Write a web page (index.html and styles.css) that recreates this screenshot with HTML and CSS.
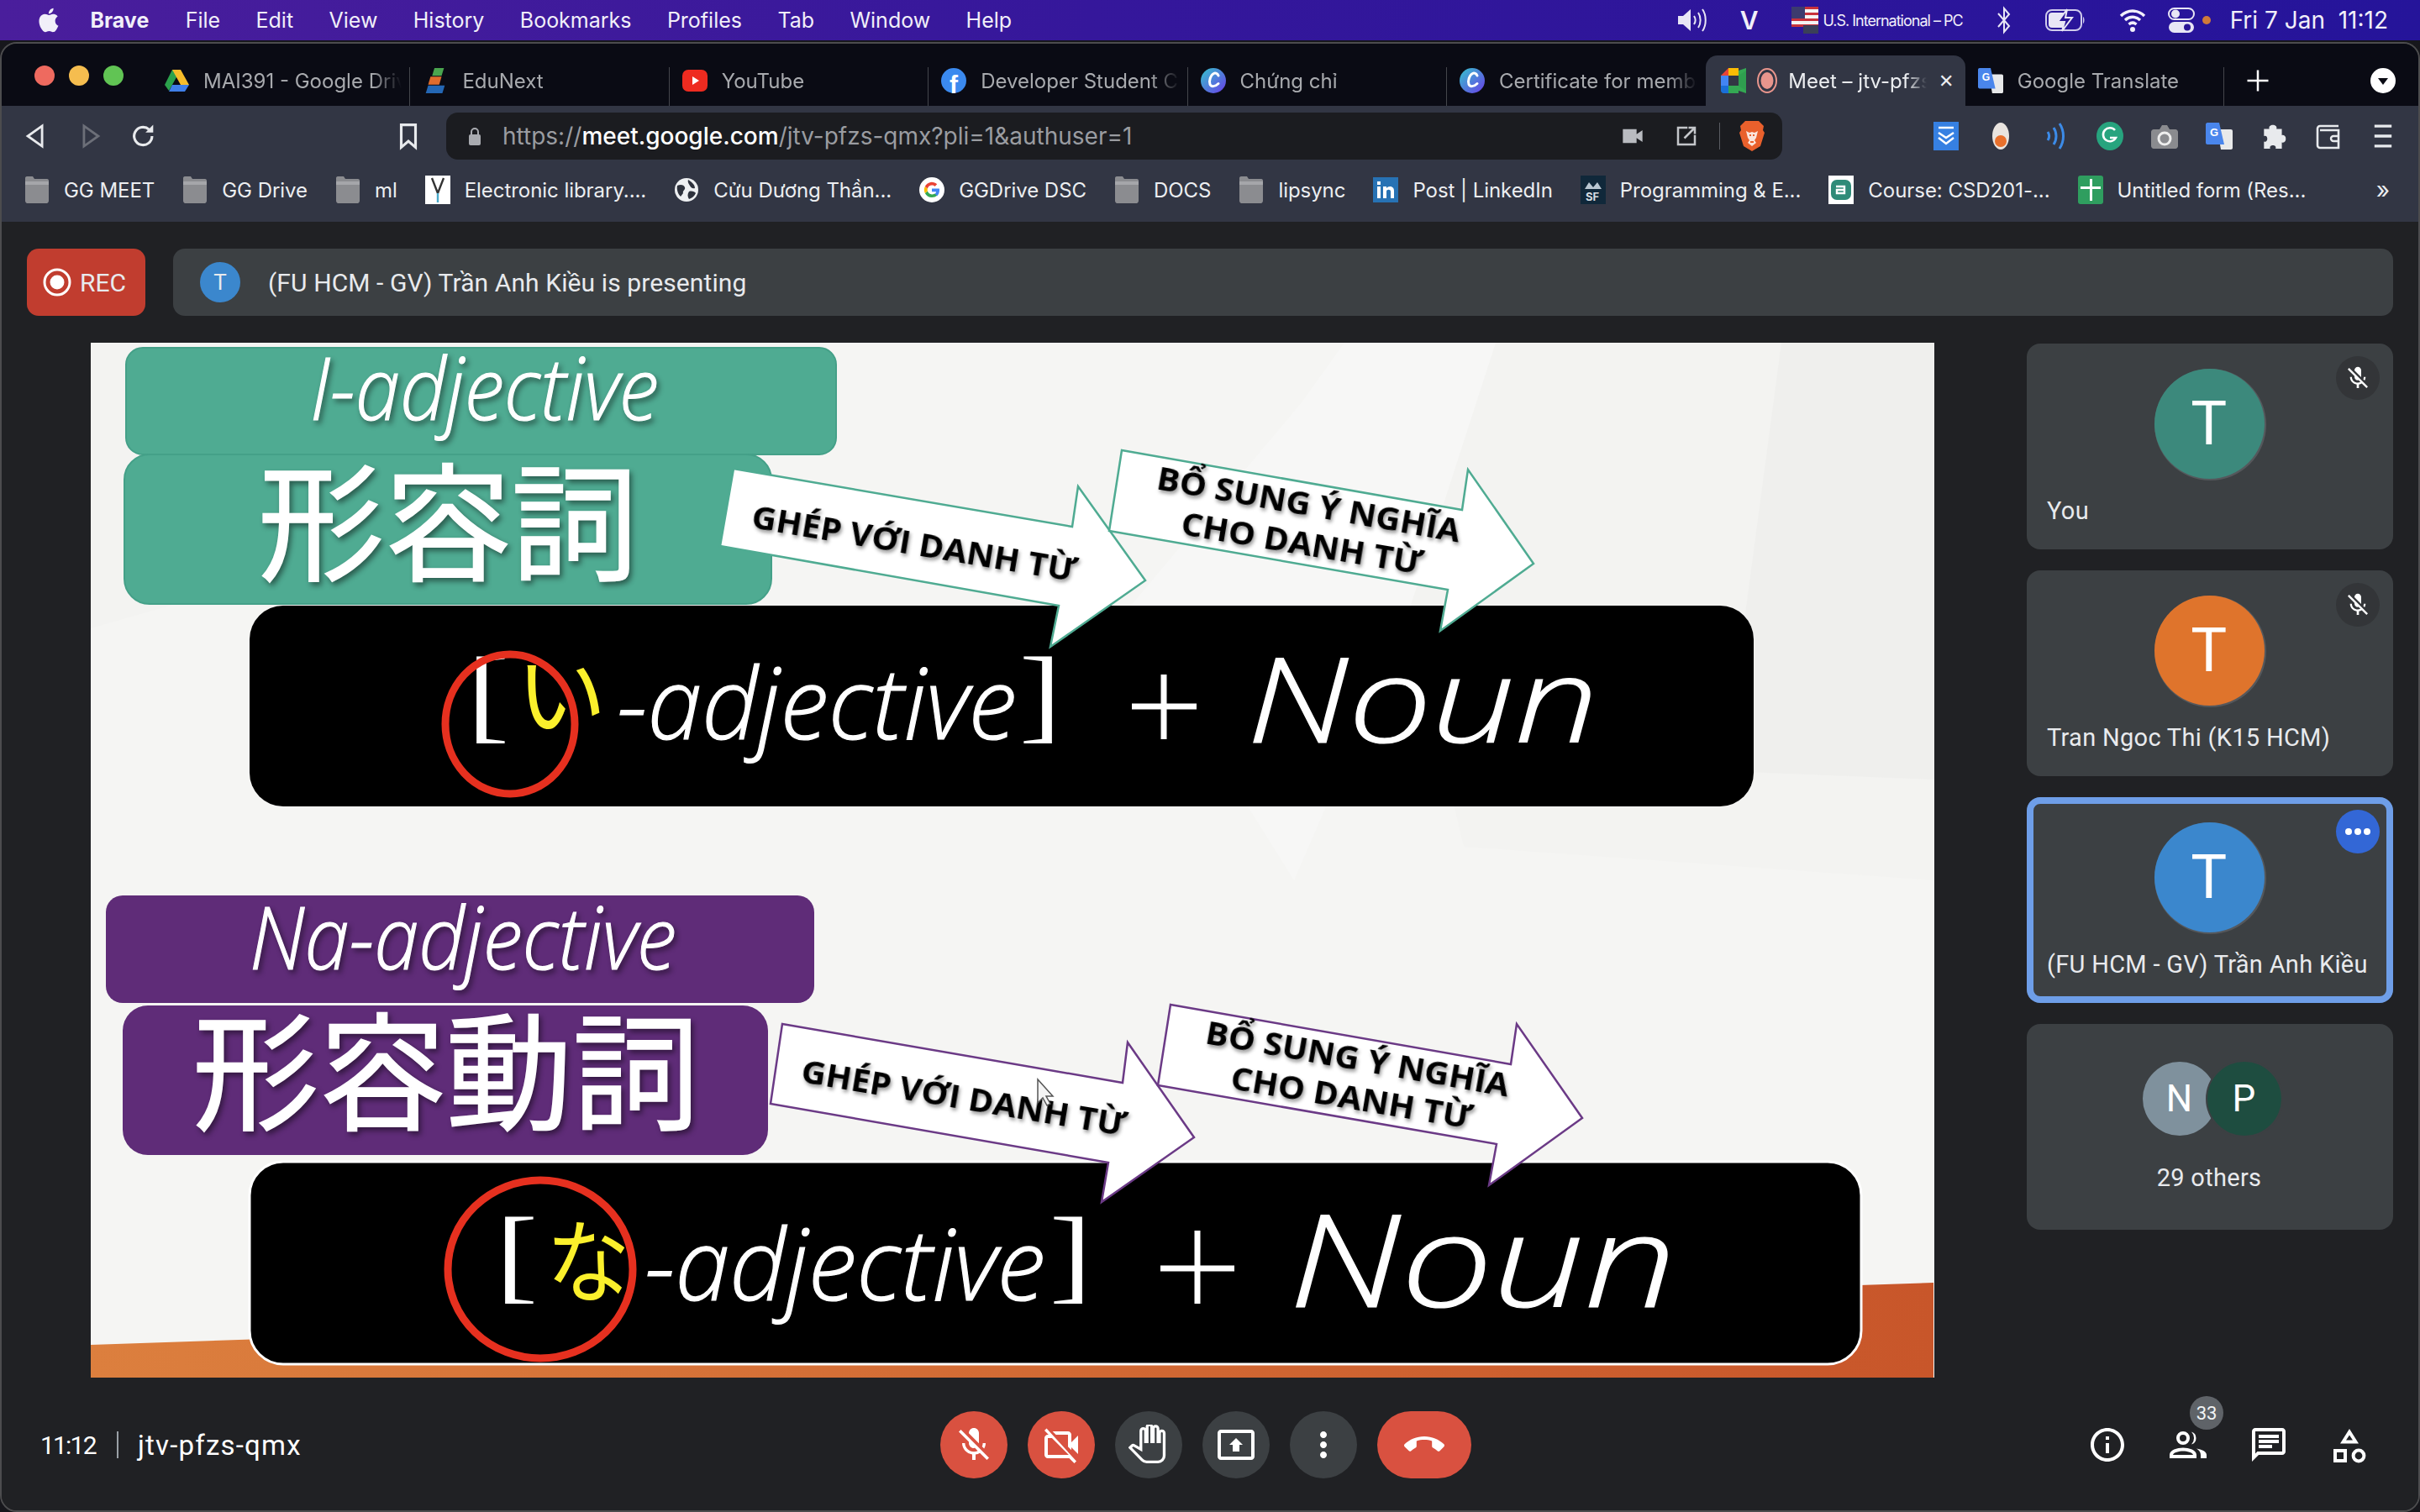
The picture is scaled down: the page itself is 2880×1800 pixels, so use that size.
FILE: index.html
```html
<!DOCTYPE html>
<html lang="en">
<head>
    <meta charset="UTF-8">
    <meta name="viewport" content="width=device-width, initial-scale=1.0">
    <title>Meet - jtv-pfzs-qmx</title>
    <link rel="stylesheet" href="styles.css">
</head>
<body>
    <svg class="icon-defs" width="0" height="0" aria-hidden="true">
        <symbol id="i-folder" viewBox="0 0 30 34"><path d="M1 3c0-1 .6-2 2-2h7l2 3h15c1.500 0 2 1 2 2v24c0 1.500-1 3-2.500 3h-23C2 33 1 31.500 1 30z" fill="#8b8c90"/><path d="M1 7h28v4H1z" fill="#a5a6aa"/></symbol>
        <symbol id="i-mic-off" viewBox="0 0 24 24"><path d="M19 11h-1.700c0 .74-.16 1.430-.43 2.050l1.230 1.230c.56-.98.9-2.090.9-3.280zm-4.020.17c0-.06.02-.11.02-.17V5c0-1.660-1.340-3-3-3S9 3.340 9 5v.18l5.980 5.990zM4.270 3L3 4.270l6.010 6.010V11c0 1.660 1.330 3 2.990 3 .22 0 .44-.03.65-.08l1.660 1.660c-.71.33-1.500.52-2.310.52-2.760 0-5.300-2.100-5.300-5.100H5c0 3.410 2.720 6.230 6 6.720V21h2v-3.280c.91-.13 1.770-.45 2.540-.9L19.730 21 21 19.730 4.270 3z"/></symbol>
        <symbol id="i-canva" viewBox="0 0 30 30"><defs><linearGradient id="canva-grad" x1="0" y1="0" x2="1" y2="1"><stop offset="0" stop-color="#35c3cc"/><stop offset="1" stop-color="#6a3de8"/></linearGradient></defs><circle cx="15" cy="15" r="15" fill="url(#canva-grad)"/><path d="M21 9c-1-2.500-3.500-3.500-5.500-2.500-4 2-6 9-4.500 13 1.200 3 6 3 10-1" fill="none" stroke="#fff" stroke-width="3" stroke-linecap="round"/></symbol>
    </svg>

    <div class="menubar">
        <svg class="apple" viewBox="0 0 24 24"><path d="M18.710 19.500c-.83 1.240-1.710 2.450-3.050 2.470-1.340.03-1.770-.79-3.290-.79-1.530 0-2 .77-3.270.82-1.310.05-2.300-1.320-3.140-2.530C4.250 17 2.940 12.450 4.700 9.390c.87-1.520 2.430-2.480 4.120-2.510 1.280-.02 2.500.87 3.290.87.78 0 2.260-1.070 3.810-.91.65.03 2.470.26 3.640 1.980-.09.06-2.170 1.280-2.150 3.810.03 3.020 2.650 4.030 2.680 4.040-.03.07-.42 1.440-1.380 2.830M13 3.500c.73-.83 1.940-1.460 2.940-1.500.13 1.170-.34 2.350-1.040 3.190-.69.85-1.830 1.510-2.950 1.420-.15-1.150.41-2.350 1.050-3.110z"/></svg>
        <span class="menu-app">Brave</span>
        <span>File</span>
        <span>Edit</span>
        <span>View</span>
        <span>History</span>
        <span>Bookmarks</span>
        <span>Profiles</span>
        <span>Tab</span>
        <span>Window</span>
        <span>Help</span>

        <div class="status">
            <svg class="st-volume" viewBox="0 0 36 32"><path d="M2 11h6l9-8v26l-9-8H2z" fill="#e8e6f5"/><path d="M21 11c2 3 2 7 0 10M26 7c3.500 5 3.500 13 0 18M31 3c5 7 5 19 0 26" fill="none" stroke="#e8e6f5" stroke-width="2"/></svg>
            <span class="st-v">V</span>
            <div class="st-input">
                <svg class="st-flag" viewBox="0 0 32 32"><rect width="32" height="24" fill="#f4f4f4"/><path d="M0 0h32v3H0zM0 7h32v3H0zM0 14h32v3H0zM0 21h32v3H0z" fill="#c8323c"/><rect width="16" height="14" fill="#3c3b6e"/><rect x="14" y="22" width="18" height="10" fill="#3a3f58"/></svg>
                <span>U.S. International – PC</span>
            </div>
            <svg class="st-bt" viewBox="0 0 18 34"><path d="M2 9l13 15-6 7V3l6 7L2 25" fill="none" stroke="#e8e6f5" stroke-width="2"/></svg>
            <svg class="st-battery" viewBox="0 0 48 32"><rect x="1" y="4" width="42" height="24" rx="7" fill="none" stroke="#cfcbec" stroke-width="2"/><rect x="4" y="7" width="20" height="18" rx="4" fill="#e8e6f5"/><path d="M45 12c2 1 2 7 0 8z" fill="#cfcbec"/><path d="M26 3L15 18h8l-3 11 12-16h-8z" fill="#2a1596" stroke="#e8e6f5" stroke-width="2"/></svg>
            <svg class="st-wifi" viewBox="0 0 32 32"><path d="M2 11c8-8 20-8 28 0M7 16c5.500-5 12.500-5 18 0M11.500 21c3-2.500 6-2.500 9 0" fill="none" stroke="#f2f0fb" stroke-width="3.400"/><circle cx="16" cy="27" r="3" fill="#f2f0fb"/></svg>
            <svg class="st-cc" viewBox="0 0 32 34"><rect x="1" y="3" width="30" height="13" rx="6.500" fill="none" stroke="#e8e6f5" stroke-width="2"/><circle cx="9" cy="9.500" r="5" fill="#e8e6f5"/><rect x="1" y="19" width="30" height="13" rx="6.500" fill="#e8e6f5"/><circle cx="23" cy="25.500" r="4" fill="#2a1596"/></svg>
            <span class="st-dot"></span>
            <span class="st-date">Fri 7 Jan&nbsp;&nbsp;11:12</span>
        </div>
    </div>

    <div class="window">
        <div class="tabstrip">
            <div class="lights"><span class="light-red"></span><span class="light-yellow"></span><span class="light-green"></span></div>

            <div class="tab">
                <svg class="favicon" viewBox="0 0 30 30"><path d="M10 2h10L6 27l-5-7z" fill="#2ba24c"/><path d="M10 2h10l10 18H20z" fill="#f7bd2a"/><path d="M6 28l4-8h20l-5 8z" fill="#3f7fe8"/></svg>
                <span class="tab-title">MAI391 - Google Drive</span>
            </div>
            <div class="tab">
                <svg class="favicon" viewBox="0 0 30 34"><path d="M14 1h12l-3 10H11z" fill="#4aa54f"/><path d="M9 12h14l-3 10H6z" fill="#e06c2c"/><path d="M6 23h21l-3 10H3z" fill="#2467b4"/></svg>
                <span class="tab-title">EduNext</span>
            </div>
            <div class="tab">
                <svg class="favicon" viewBox="0 0 30 30"><rect y="2" width="30" height="26" rx="7" fill="#ee2b20"/><path d="M12 10l8 5-8 5z" fill="#fff"/></svg>
                <span class="tab-title">YouTube</span>
            </div>
            <div class="tab">
                <svg class="favicon" viewBox="0 0 30 30"><circle cx="15" cy="15" r="15" fill="#3b8aef"/><text class="fb-f" x="10" y="30">f</text></svg>
                <span class="tab-title">Developer Student Clubs</span>
            </div>
            <div class="tab">
                <svg class="favicon"><use href="#i-canva"/></svg>
                <span class="tab-title">Chứng chỉ</span>
            </div>
            <div class="tab tab-before-active">
                <svg class="favicon"><use href="#i-canva"/></svg>
                <span class="tab-title">Certificate for members</span>
            </div>
            <div class="tab tab-active">
                <svg class="favicon" viewBox="0 0 30 30"><path d="M0 9l9-9v9z" fill="#ea4335"/><path d="M9 0h12v9H9z" fill="#fbbc04"/><path d="M0 9h9v12H0z" fill="#4285f4"/><path d="M0 21h9v9H3c-1.500 0-3-1.500-3-3z" fill="#1a6fd8"/><path d="M9 21h12v9H9z" fill="#34a853"/><path d="M21 3v24l9 3V0z" fill="#34a853"/><path d="M21 9l9-6v24l-9-6z" fill="#2f9e4f"/></svg>
                <svg class="rec-dot" viewBox="0 0 24 30"><ellipse cx="12" cy="15" rx="11" ry="14" fill="none" stroke="#e8958c" stroke-width="2"/><ellipse cx="12" cy="15" rx="7.500" ry="10" fill="#e8958c"/></svg>
                <span class="tab-title">Meet – jtv-pfzs-qmx</span>
                <span class="tab-close">✕</span>
            </div>
            <div class="tab">
                <svg class="favicon" viewBox="0 0 32 32"><path d="M14 8h16c1 0 2 .8 2 2v20c0 1-.8 2-2 2H18z" fill="#e8e9ea"/><path d="M2 0h14l6 26H2c-1 0-2-1-2-2V2C0 1 1 0 2 0z" fill="#4a86ec"/><text class="translate-g" x="5" y="16">G</text></svg>
                <span class="tab-title">Google Translate</span>
            </div>

            <svg class="new-tab" viewBox="0 0 24 24"><path d="M11 2h2v9h9v2h-9v9h-2v-9H2v-2h9z"/></svg>
            <svg class="tab-search" viewBox="0 0 30 30"><circle cx="15" cy="15" r="15" fill="#fff"/><path d="M9 12h12l-6 8z" fill="#0a0b14"/></svg>
        </div>

        <div class="toolbar">
            <button class="nav-btn"><svg viewBox="0 0 24 24"><path d="M17 3.500v17L5 12z" fill="none" stroke="#e8eaed" stroke-width="2"/></svg></button>
            <button class="nav-btn"><svg viewBox="0 0 24 24"><path d="M7 3.500v17L19 12z" fill="none" stroke="#6c6f78" stroke-width="2"/></svg></button>
            <button class="nav-btn"><svg viewBox="0 0 24 24"><path d="M19 12a7.500 7.500 0 1 1-2.500-5.600" fill="none" stroke="#e8eaed" stroke-width="2.200"/><path d="M20 2.500V9h-6.500z" fill="#e8eaed"/></svg></button>
            <svg class="bookmark-star" viewBox="0 0 24 28"><path d="M5 3h14v22l-7-6-7 6z" fill="none" stroke="#e8eaed" stroke-width="2.600"/></svg>

            <div class="address">
                <svg class="lock" viewBox="0 0 18 24"><path d="M5 10V7a4 4 0 0 1 8 0v3" fill="none" stroke="#a9abb0" stroke-width="2"/><rect x="2" y="10" width="14" height="13" rx="2" fill="#a9abb0"/></svg>
                <span class="url">https://<b>meet.google.com</b>/jtv-pfzs-qmx?pli=1&amp;authuser=1</span>
                <svg class="addr-cam" viewBox="0 0 24 24"><path d="M2 5h14v14H2zM16 10l6-4v12l-6-4z" fill="#b9bbc0"/></svg>
                <svg class="addr-share" viewBox="0 0 24 24"><path d="M13 4H4v16h16v-9M10 14L20 4M14 4h6v6" fill="none" stroke="#c4c6ca" stroke-width="2"/></svg>
                <span class="addr-sep"></span>
                <svg class="addr-brave" viewBox="0 0 32 38"><path d="M8 1h16l6 6-1 5 2 3-5 16-10 6-10-6L1 15l2-3-1-5z" fill="#e9602c"/><path d="M9 13l4 2 3-1 3 1 4-2-2 8-2 3 2 3-5 4-5-4 2-3-2-3z" fill="#fbe5dc"/><path d="M13 18h2M17 18h2M14 26h4" stroke="#e9602c" stroke-width="2"/></svg>
            </div>

            <div class="extensions">
                <span class="ext"><svg viewBox="0 0 30 34"><rect width="30" height="34" fill="#3680e2"/><path d="M6 7h18M6 13l9 6 9-6M6 19l9 7 9-7" fill="none" stroke="#fff" stroke-width="2.400"/></svg></span>
                <span class="ext"><svg viewBox="0 0 22 34"><ellipse cx="11" cy="17" rx="10" ry="16" fill="#e9e4df"/><circle cx="11" cy="23" r="7" fill="#e8702c"/></svg></span>
                <span class="ext"><svg viewBox="0 0 24 34"><path d="M3 12c2 3 2 7 0 10M10 7c4 6 4 14 0 20M17 2c6 9 6 21 0 30" fill="none" stroke="#3c8be8" stroke-width="3"/></svg></span>
                <span class="ext"><svg viewBox="0 0 32 34"><ellipse cx="16" cy="17" rx="16" ry="17" fill="#27a47e"/><path d="M22 10a8 8 0 1 0 1 9h-7" fill="none" stroke="#fff" stroke-width="2.600"/></svg></span>
                <span class="ext"><svg viewBox="0 0 32 34"><path d="M3 9h7l3-5h6l3 5h7c1.500 0 3 1.500 3 3v17c0 1.500-1.500 3-3 3H3c-1.500 0-3-1.500-3-3V12c0-1.500 1.500-3 3-3z" fill="#8a8b8f"/><circle cx="16" cy="20" r="7" fill="#8a8b8f" stroke="#eee" stroke-width="3"/></svg></span>
                <span class="ext"><svg viewBox="0 0 32 32"><path d="M14 8h16c1 0 2 .8 2 2v20c0 1-.8 2-2 2H18z" fill="#e8e9ea"/><path d="M2 0h14l6 26H2c-1 0-2-1-2-2V2C0 1 1 0 2 0z" fill="#4a86ec"/><text class="translate-g" x="5" y="16">G</text></svg></span>
                <span class="ext"><svg viewBox="0 0 28 32"><path d="M3 8h6c-2-6 10-6 8 0h6v7c6-2 6 10 0 8v7h-7c2-5-8-5-6 0H3v-8c5 2 5-8 0-6z" fill="#e8eaed"/></svg></span>
                <span class="ext"><svg viewBox="0 0 32 34"><path d="M28 5H6a3 3 0 0 0-3 3v20a3 3 0 0 0 3 3h22V10H6" fill="none" stroke="#e8eaed" stroke-width="2.600"/><path d="M29 17h-7a3 3 0 0 0 0 6h7" fill="none" stroke="#e8eaed" stroke-width="2.400"/></svg></span>
                <span class="ext"><svg viewBox="0 0 24 30"><path d="M3 3h18v3H3zM3 13.500h18v3H3zM3 24h18v3H3z" fill="#e8eaed"/></svg></span>
            </div>
        </div>

        <div class="bookmarks">
            <span class="bm"><svg class="bm-ico"><use href="#i-folder"/></svg>GG MEET</span>
            <span class="bm"><svg class="bm-ico"><use href="#i-folder"/></svg>GG Drive</span>
            <span class="bm"><svg class="bm-ico"><use href="#i-folder"/></svg>ml</span>
            <span class="bm"><svg class="bm-ico" viewBox="0 0 30 34"><rect width="30" height="34" fill="#fff"/><path d="M8 3l7 18 7-18" fill="none" stroke="#333" stroke-width="2.400"/><path d="M15 21v11" stroke="#49a9c9" stroke-width="2.400"/></svg>Electronic library....</span>
            <span class="bm"><svg class="bm-ico" viewBox="0 0 30 30"><circle cx="15" cy="15" r="14" fill="#eef0f2"/><path d="M4 10c4-2 8-1 9 2s-3 4-2 7l-3 4c-3-3-5-8-4-13zM17 3c3 2 8 5 8 10-3 1-5-1-6-3s-3-4-2-7zM18 17c3-1 7 0 8 2-2 4-5 6-8 7-2-3-2-6 0-9z" fill="#2e323d"/></svg>Cửu Dương Thần...</span>
            <span class="bm"><svg class="bm-ico" viewBox="0 0 30 30"><circle cx="15" cy="15" r="15" fill="#fff"/><path d="M24 15.500c0-.8 0-1.400-.2-2H15v3.700h5.100c-.2 1.200-.9 2.200-2 2.900l3 2.300c1.800-1.600 2.900-4 2.900-6.900z" fill="#4285f4"/><path d="M15 24c2.500 0 4.500-.8 6.100-2.200l-3-2.300c-.8.6-1.900.9-3.100.9-2.400 0-4.400-1.600-5.100-3.800l-3.100 2.400C8.300 22.100 11.400 24 15 24z" fill="#34a853"/><path d="M9.900 16.600a5.500 5.500 0 0 1 0-3.200L6.800 11a9 9 0 0 0 0 8z" fill="#fbbc04"/><path d="M15 9.600c1.400 0 2.600.5 3.500 1.400l2.700-2.700A9 9 0 0 0 6.800 11l3.100 2.400C10.600 11.200 12.600 9.600 15 9.600z" fill="#ea4335"/></svg>GGDrive DSC</span>
            <span class="bm"><svg class="bm-ico"><use href="#i-folder"/></svg>DOCS</span>
            <span class="bm"><svg class="bm-ico"><use href="#i-folder"/></svg>lipsync</span>
            <span class="bm"><svg class="bm-ico" viewBox="0 0 30 30"><rect width="30" height="30" fill="#2772b4"/><path d="M5 11h4v14H5zM5 5h4v4H5zM12 11h4v2c2-3 9-3 9 3v9h-4v-8c0-3-5-3-5 0v8h-4z" fill="#fff"/></svg>Post | LinkedIn</span>
            <span class="bm"><svg class="bm-ico" viewBox="0 0 30 34"><rect width="30" height="34" fill="#10283a"/><path d="M5 16l5-8 5 6 5-6 5 8z" fill="#b9c7d2"/><text class="bm-sf" x="6" y="30">SF</text></svg>Programming &amp; E...</span>
            <span class="bm"><svg class="bm-ico" viewBox="0 0 30 34"><rect width="30" height="34" fill="#fff"/><rect x="3" y="5" width="24" height="24" rx="7" fill="#2f8b78"/><path d="M9 13h10v8H10v-4h9" fill="none" stroke="#fff" stroke-width="2.400"/></svg>Course: CSD201-...</span>
            <span class="bm"><svg class="bm-ico" viewBox="0 0 30 34"><rect width="30" height="34" rx="3" fill="#2f9e5f"/><path d="M14 4h3v26h-3zM3 13h24v3H3z" fill="#fff"/></svg>Untitled form (Res...</span>
            <span class="bm-more">»</span>
        </div>

        <div class="meet">
            <div class="meet-top">
                <div class="rec-chip">
                    <svg class="rec-ico" viewBox="0 0 34 34"><circle cx="17" cy="17" r="15" fill="none" stroke="#fff" stroke-width="3"/><circle cx="17" cy="17" r="8.500" fill="#fff"/></svg>
                    <span>REC</span>
                </div>
                <div class="presenter-bar">
                    <span class="presenter-avatar">T</span>
                    <span>(FU HCM - GV) Trần Anh Kiều is presenting</span>
                </div>
            </div>

            <div class="stage">
                <svg class="slide" viewBox="108 408 2194 1232" width="2194" height="1232">
                    <defs>
                        <linearGradient id="floor-grad" x1="0" y1="0" x2="1" y2="0"><stop offset="0" stop-color="#dc7f3e"/><stop offset="1" stop-color="#c8562a"/></linearGradient>
                    </defs>
                    <rect class="slide-bg" x="108" y="408" width="2194" height="1232"/>
                    <path class="facet-a" d="M1600 408h702v640l-560-40z"/>
                    <path class="facet-b" d="M1600 408h180l-110 340-130 300-200-320 210-250z"/>
                    <path class="facet-c" d="M2120 408h182v520l-250-10z"/>
                    <path class="facet-a" d="M108 408h60l80 300-140 40z"/>
                    <path d="M108 1601L2301 1527V1640H108z" fill="url(#floor-grad)"/>

                    <!-- i-adjective block -->
                    <rect class="box-teal" x="150" y="414" width="845" height="127" rx="20"/>
                    <rect class="box-teal" x="148" y="541" width="770" height="178" rx="30"/>
                    <text class="hand hand-shadow" x="369" y="500" font-size="104" textLength="415" lengthAdjust="spacingAndGlyphs">I-adjective</text>
                    <text class="kanji" x="307" y="680" font-size="152" textLength="452" lengthAdjust="spacingAndGlyphs" lang="ja">形容詞</text>
                    <rect class="box-black" x="297" y="721" width="1790" height="239" rx="40"/>

                    <path class="arrow-teal" d="M873 558L1276 627L1283 579L1363 691L1250 770L1260 721L857 650z"/>
                    <text class="arrow-text" transform="translate(893 628) rotate(9.500)" textLength="392" lengthAdjust="spacingAndGlyphs">GHÉP VỚI DANH TỪ</text>
                    <path class="arrow-teal" d="M1335 536L1740 607L1747 559L1825 671L1714 751L1723 702L1320 632z"/>
                    <text class="arrow-text" transform="translate(1375 582) rotate(10)" textLength="366" lengthAdjust="spacingAndGlyphs">BỔ SUNG Ý NGHĨA</text>
                    <text class="arrow-text" transform="translate(1404 636) rotate(9.500)" textLength="291" lengthAdjust="spacingAndGlyphs">CHO DANH TỪ</text>

                    <text class="bracket" x="556" y="868" textLength="50" lengthAdjust="spacingAndGlyphs">[</text>
                    <text class="kana" x="614" y="866" font-size="106" textLength="108" lengthAdjust="spacingAndGlyphs" lang="ja">い</text>
                    <text class="hand" x="734" y="880" font-size="118" textLength="476" lengthAdjust="spacingAndGlyphs">-adjective</text>
                    <text class="bracket" x="1213" y="868" textLength="50" lengthAdjust="spacingAndGlyphs">]</text>
                    <path class="plus" d="M1347 841h77M1385 803v77"/>
                    <text class="hand" x="1484" y="884" font-size="140" textLength="418" lengthAdjust="spacingAndGlyphs">Noun</text>
                    <ellipse class="ring" cx="607" cy="862" rx="77" ry="83"/>

                    <!-- na-adjective block -->
                    <rect class="box-purple" x="126" y="1066" width="843" height="128" rx="20"/>
                    <rect class="box-purple" x="146" y="1197" width="768" height="178" rx="30"/>
                    <text class="hand hand-shadow" x="297" y="1154" font-size="104" textLength="508" lengthAdjust="spacingAndGlyphs">Na-adjective</text>
                    <text class="kanji" x="229" y="1334" font-size="152" textLength="603" lengthAdjust="spacingAndGlyphs" lang="ja">形容動詞</text>
                    <rect class="box-black box-outlined" x="297" y="1383" width="1918" height="241" rx="40"/>

                    <path class="arrow-purple" d="M931 1219L1336 1289L1342 1241L1421 1354L1311 1431L1319 1384L917 1314z"/>
                    <text class="arrow-text" transform="translate(952 1288) rotate(9.500)" textLength="392" lengthAdjust="spacingAndGlyphs">GHÉP VỚI DANH TỪ</text>
                    <path class="arrow-purple" d="M1393 1196L1798 1267L1805 1219L1883 1331L1772 1411L1781 1362L1378 1292z"/>
                    <text class="arrow-text" transform="translate(1433 1242) rotate(10)" textLength="366" lengthAdjust="spacingAndGlyphs">BỔ SUNG Ý NGHĨA</text>
                    <text class="arrow-text" transform="translate(1463 1296) rotate(9.500)" textLength="291" lengthAdjust="spacingAndGlyphs">CHO DANH TỪ</text>
                    <path class="pointer" d="M1235 1285v28l6-6 5 9 4-2-5-9h8z"/>

                    <text class="bracket" x="590" y="1535" textLength="50" lengthAdjust="spacingAndGlyphs">[</text>
                    <text class="kana" x="650" y="1542" font-size="108" textLength="100" lengthAdjust="spacingAndGlyphs" lang="ja">な</text>
                    <text class="hand" x="767" y="1548" font-size="118" textLength="477" lengthAdjust="spacingAndGlyphs">-adjective</text>
                    <text class="bracket" x="1249" y="1535" textLength="50" lengthAdjust="spacingAndGlyphs">]</text>
                    <path class="plus" d="M1381 1510h88M1425 1465v87"/>
                    <text class="hand" x="1534" y="1556" font-size="154" textLength="461" lengthAdjust="spacingAndGlyphs">Noun</text>
                    <ellipse class="ring" cx="643" cy="1511" rx="110" ry="106"/>
                </svg>

                <div class="tiles">
                    <div class="tile">
                        <span class="tile-badge"><svg viewBox="0 0 24 24"><use href="#i-mic-off"/></svg></span>
                        <span class="avatar avatar-teal">T</span>
                        <div class="tile-name">You</div>
                    </div>
                    <div class="tile">
                        <span class="tile-badge"><svg viewBox="0 0 24 24"><use href="#i-mic-off"/></svg></span>
                        <span class="avatar avatar-orange">T</span>
                        <div class="tile-name">Tran Ngoc Thi (K15 HCM)</div>
                    </div>
                    <div class="tile tile-speaking">
                        <span class="tile-badge tile-badge-blue"><i></i><i></i><i></i></span>
                        <span class="avatar avatar-blue">T</span>
                        <div class="tile-name">(FU HCM - GV) Trần Anh Kiều</div>
                    </div>
                    <div class="tile tile-others">
                        <div class="others-row">
                            <span class="mini-avatar mini-grey">N</span>
                            <span class="mini-avatar mini-green">P</span>
                        </div>
                        <div class="others-label">29 others</div>
                    </div>
                </div>
            </div>

            <div class="meet-bar">
                <div class="meeting-info">
                    <span class="meeting-time">11:12</span>
                    <span class="info-sep"></span>
                    <span class="meeting-code">jtv-pfzs-qmx</span>
                </div>
                <div class="controls">
                    <button class="ctl ctl-red"><svg viewBox="0 0 24 24"><use href="#i-mic-off"/></svg></button>
                    <button class="ctl ctl-red"><svg viewBox="0 0 24 24"><path d="M18 10.480V6c0-1.100-.9-2-2-2H6.830l2 2H16v7.170l2 2v-1.650l4 3.980v-11l-4 3.980z"/><path d="M3.270 2.270L2 3.540 4.460 6H4c-1.100 0-2 .9-2 2v10c0 1.100.9 2 2 2h12c.2 0 .4-.04.58-.1l3.150 3.100L21 21.730zM4 18V8h2.460l10 10z"/></svg></button>
                    <button class="ctl"><svg viewBox="0 0 26 26"><path class="hand-line" d="M23 5.500V20c0 2.200-1.800 4-4 4h-7.300c-1.080 0-2.100-.43-2.850-1.190L1 14.830s1.260-1.230 1.300-1.250c.22-.19.49-.29.79-.29.22 0 .42.06.6.16.04.01 4.310 2.460 4.310 2.460V4c0-.83.67-1.500 1.500-1.500S11 3.170 11 4v7h1V1.500c0-.83.67-1.500 1.500-1.500S15 .67 15 1.500V11h1V2.500c0-.83.67-1.500 1.500-1.500s1.500.67 1.500 1.500V11h1V5.500c0-.83.67-1.500 1.500-1.500s1.500.67 1.500 1.500z"/></svg></button>
                    <button class="ctl"><svg viewBox="0 0 24 24"><path d="M21 3H3c-1.110 0-2 .89-2 2v14c0 1.110.89 2 2 2h18c1.110 0 2-.89 2-2V5c0-1.110-.89-2-2-2zm0 16.020H3V4.980h18v14.040zM10 12H8l4-4 4 4h-2v4h-4v-4z"/></svg></button>
                    <button class="ctl"><svg viewBox="0 0 24 24"><path d="M12 8c1.100 0 2-.9 2-2s-.9-2-2-2-2 .9-2 2 .9 2 2 2zm0 2c-1.100 0-2 .9-2 2s.9 2 2 2 2-.9 2-2-.9-2-2-2zm0 6c-1.100 0-2 .9-2 2s.9 2 2 2 2-.9 2-2-.9-2-2-2z"/></svg></button>
                    <button class="ctl ctl-red ctl-hangup"><svg viewBox="0 0 24 24"><path d="M12 9c-1.600 0-3.150.25-4.600.72v3.100c0 .39-.23.74-.56.9-.98.49-1.870 1.120-2.660 1.850-.18.18-.43.28-.7.28-.28 0-.53-.11-.71-.29L.29 13.080c-.18-.17-.29-.42-.29-.7 0-.28.11-.53.29-.71C3.340 8.780 7.460 7 12 7s8.660 1.780 11.710 4.670c.18.18.29.43.29.71 0 .28-.11.53-.29.71l-2.480 2.480c-.18.18-.43.29-.71.29-.27 0-.52-.11-.7-.28-.79-.74-1.690-1.360-2.670-1.850-.33-.16-.56-.5-.56-.9v-3.100C15.150 9.250 13.600 9 12 9z"/></svg></button>
                </div>
                <div class="side-actions">
                    <span class="act"><svg viewBox="0 0 24 24"><path d="M11 7h2v2h-2zm0 4h2v6h-2zm1-9C6.480 2 2 6.480 2 12s4.480 10 10 10 10-4.480 10-10S17.520 2 12 2zm0 18c-4.410 0-8-3.590-8-8s3.590-8 8-8 8 3.590 8 8-3.590 8-8 8z"/></svg></span>
                    <span class="act act-people">
                        <svg viewBox="0 0 24 24"><path fill-rule="evenodd" d="M9 4a4 4 0 1 1 0 8 4 4 0 0 1 0-8zm0 2a2 2 0 1 0 0 4 2 2 0 0 0 0-4zM1 20v-2c0-2.800 4.500-4.200 8-4.200s8 1.400 8 4.200v2zm2-2h12c-.4-1.300-3.500-2.200-6-2.200S3.400 16.700 3 18zM14 4.200a4 4 0 0 1 0 7.600 5.500 5.500 0 0 0 0-7.600zM17 14.200c3 .5 6 1.700 6 3.800v2h-3.500v-2c0-1.600-1-2.800-2.500-3.800z"/></svg>
                        <span class="people-count">33</span>
                    </span>
                    <span class="act"><svg viewBox="0 0 24 24"><path d="M20 2H4c-1.100 0-2 .9-2 2v18l4-4h14c1.100 0 2-.9 2-2V4c0-1.100-.9-2-2-2zm0 14H5.200L4 17.200V4h16v12zM6 6h12v2H6zm0 3h12v2H6zm0 3h8v2H6z"/></svg></span>
                    <span class="act"><svg viewBox="0 0 24 24"><path d="M12 2.500l5.500 8.700h-11zm0 3.800l-2 3h4zM2.500 14.500h8v8h-8zm2 2v4h4v-4zM17.500 14.300a4.200 4.200 0 1 1 0 8.400 4.200 4.200 0 0 1 0-8.400zm0 2a2.200 2.200 0 1 0 0 4.400 2.200 2.200 0 0 0 0-4.400z" fill-rule="evenodd"/></svg></span>
                </div>
            </div>
        </div>
    </div>
</body>
</html>
```

FILE: styles.css
```css
* {
    box-sizing: border-box;
}
html, body {
    margin: 0;
    padding: 0;
}
body {
    width: 2880px;
    height: 1800px;
    overflow: hidden;
    background: #17171c;
    font-family: Roboto, "Noto Sans", sans-serif;
    color: #e8eaed;
}
button {
    border: none;
    background: none;
    padding: 0;
}
.icon-defs {
    position: absolute;
}

/* mac menu bar */
.menubar {
    height: 48px;
    display: flex;
    align-items: center;
    gap: 42.4px;
    padding-left: 41px;
    margin-bottom: 2px;
    background: linear-gradient(90deg, #4a1e9c 0%, #35179b 45%, #25149a 100%);
    font-family: Inter, "Liberation Sans", sans-serif;
    font-size: 25px;
    color: #f1eff9;
}
.apple {
    width: 34px;
    height: 38px;
    margin-right: -10px;
    fill: #f1eff9;
}
.menu-app {
    font-weight: 700;
    margin-right: 1px;
}
.status {
    margin-left: auto;
    padding-right: 38px;
    display: flex;
    align-items: center;
    gap: 40px;
}
.st-volume { width: 36px; height: 32px; }
.st-v { font-size: 30px; font-weight: 600; }
.st-input {
    display: flex;
    align-items: center;
    gap: 5px;
    font-size: 18px;
    letter-spacing: -1px;
}
.st-flag { width: 32px; height: 32px; }
.st-bt { width: 18px; height: 34px; }
.st-battery { width: 48px; height: 32px; }
.st-wifi { width: 32px; height: 32px; }
.st-cc { width: 32px; height: 34px; margin-left: -14px; }
.st-dot {
    width: 10px;
    height: 10px;
    margin-left: -31px;
    border-radius: 50%;
    background: #d07a3a;
}
.st-date {
    margin-left: -17px;
    font-size: 28px;
}

/* browser window */
.window {
    height: 1750px;
    display: flex;
    flex-direction: column;
    border: 2px solid #4c4c4e;
    border-radius: 20px;
    overflow: hidden;
    background: #202124;
}

.tabstrip {
    flex: none;
    height: 74px;
    display: flex;
    align-items: flex-end;
    background: #0a0b14;
    font-family: Inter, "Liberation Sans", sans-serif;
    font-size: 24px;
}
.lights {
    flex: 0 0 178px;
    height: 74px;
    display: flex;
    align-items: center;
    gap: 17px;
    padding: 0 0 0 39px;
}
.lights span {
    width: 24px;
    height: 24px;
    margin-top: 1px;
    border-radius: 50%;
}
.light-red { background: #ee6a5f; }
.light-yellow { background: #f5bd4f; }
.light-green { background: #61c454; }

.tab {
    position: relative;
    flex: 0 0 308.4px;
    min-width: 0;
    height: 60px;
    display: flex;
    align-items: center;
    padding: 0 10px 0 15px;
    color: #a8aaae;
}
.tab::after {
    content: "";
    position: absolute;
    right: 0;
    bottom: 0;
    width: 1px;
    height: 46px;
    background: #44464c;
}
.tab-before-active::after,
.tab-active::after {
    display: none;
}
.favicon {
    flex: none;
    width: 30px;
    height: 32px;
    margin-right: 17px;
}
.tab-title {
    flex: 1;
    min-width: 0;
    white-space: nowrap;
    overflow: hidden;
    -webkit-mask-image: linear-gradient(90deg, #000 85%, transparent 100%);
    mask-image: linear-gradient(90deg, #000 85%, transparent 100%);
}
.tab-active {
    border-radius: 14px 14px 0 0;
    padding: 0 14px 0 18px;
    background: #323644;
    color: #eceef1;
}
.tab-active .favicon {
    margin-right: 13px;
}
.rec-dot {
    flex: none;
    width: 24px;
    height: 30px;
    margin-right: 13px;
}
.tab-close {
    margin-left: 14px;
    font-size: 22px;
    color: #eceef1;
}
.fb-f {
    font-family: "Liberation Sans", sans-serif;
    font-size: 30px;
    font-weight: 700;
    fill: #fff;
}
.translate-g {
    font-family: "Liberation Sans", sans-serif;
    font-size: 13px;
    font-weight: 700;
    fill: #fff;
}
.new-tab {
    width: 30px;
    height: 30px;
    margin: 0 0 15px 25px;
    fill: #fff;
}
.tab-search {
    width: 30px;
    height: 30px;
    margin: 0 0 15px 119px;
}

.toolbar {
    flex: none;
    height: 72px;
    padding: 8px 0 8px 9px;
    display: flex;
    align-items: center;
    background: #323644;
}
.nav-btn {
    width: 64px;
    height: 56px;
    display: flex;
    align-items: center;
    justify-content: center;
}
.nav-btn svg {
    width: 34px;
    height: 34px;
}
.bookmark-star {
    width: 30px;
    height: 34px;
    margin-left: 268px;
}
.address {
    width: 1590px;
    height: 56px;
    margin-left: 30px;
    padding: 0 0 0 25px;
    display: flex;
    align-items: center;
    border-radius: 14px;
    background: #1b1c20;
    font-family: Inter, "Liberation Sans", sans-serif;
    font-size: 28px;
    color: #9a9ca1;
}
.lock {
    width: 18px;
    height: 24px;
    margin-right: 24px;
}
.url {
    flex: 1;
    white-space: nowrap;
}
.url b {
    font-weight: 500;
    color: #fff;
}
.addr-cam {
    width: 28px;
    height: 28px;
    margin-right: 35px;
}
.addr-share {
    width: 30px;
    height: 32px;
    margin-right: 24px;
}
.addr-sep {
    width: 1px;
    height: 32px;
    margin-right: 22px;
    background: #5a5c62;
}
.addr-brave {
    width: 32px;
    height: 38px;
    margin-right: 20px;
}
.extensions {
    display: flex;
    margin-left: 162px;
}
.ext {
    width: 65px;
    height: 56px;
    display: flex;
    align-items: center;
    justify-content: center;
}
.ext svg {
    width: 32px;
    height: 34px;
}

.bookmarks {
    flex: none;
    height: 66px;
    padding: 0 0 10px 27px;
    display: flex;
    align-items: center;
    gap: 33px;
    background: #323644;
    font-family: Inter, "Liberation Sans", sans-serif;
    font-size: 24px;
    letter-spacing: -0.05px;
    color: #eceef1;
    white-space: nowrap;
}
.bm {
    display: flex;
    align-items: center;
    gap: 17px;
}
.bm-ico {
    width: 30px;
    height: 34px;
}
.bm-sf {
    font-size: 13px;
    font-weight: 700;
    fill: #d6dde2;
}
.bm-more {
    margin-left: auto;
    margin-right: 34px;
    font-size: 28px;
}

/* meet */
.meet {
    flex: 1;
    min-height: 0;
    display: flex;
    flex-direction: column;
    background: #202124;
}
.meet-top {
    flex: none;
    height: 144px;
    padding: 32px 30px 0 30px;
    display: flex;
    gap: 33px;
}
.rec-chip {
    width: 141px;
    height: 80px;
    display: flex;
    align-items: center;
    gap: 10px;
    padding-left: 19px;
    border-radius: 14px;
    background: #c13d2f;
    font-size: 30px;
}
.rec-ico {
    width: 34px;
    height: 34px;
}
.presenter-bar {
    flex: 1;
    height: 80px;
    display: flex;
    align-items: center;
    gap: 33px;
    padding-left: 32px;
    border-radius: 14px;
    background: #3c4043;
    font-size: 30px;
    letter-spacing: 0.1px;
}
.presenter-avatar {
    width: 48px;
    height: 48px;
    display: flex;
    align-items: center;
    justify-content: center;
    border-radius: 50%;
    background: #3b87cd;
    font-size: 26px;
}
.stage {
    flex: none;
    height: 1232px;
    padding-left: 106px;
    display: flex;
    gap: 110px;
}
.slide {
    flex: none;
    display: block;
}
.slide-bg { fill: #f5f5f3; }
.facet-a { fill: #f3f3f1; }
.facet-b { fill: #f7f7f6; }
.facet-c { fill: #efefed; }
.box-teal { fill: #4fab92; stroke: #44a088; stroke-width: 2px; }
.box-purple { fill: #5f2c78; }
.box-black { fill: #000; }
.box-outlined { stroke: #fff; stroke-width: 3px; }
.arrow-teal { fill: #fff; stroke: #4fab92; stroke-width: 2.5px; }
.arrow-purple { fill: #fff; stroke: #6b3a86; stroke-width: 2.5px; }
.hand {
    font-family: "Open Sans", "Liberation Sans", sans-serif;
    font-style: italic;
    font-weight: 300;
    fill: #fff;
    stroke: #fff;
    stroke-width: 1.2px;
}
.bracket {
    font-family: "Liberation Serif", serif;
    font-size: 125px;
    fill: #fff;
}
.hand-shadow,
.kanji {
    filter: drop-shadow(3px 4px 3px rgba(0, 0, 0, 0.45));
}
.kanji {
    font-family: "Noto Sans CJK TC", "Noto Sans CJK JP", sans-serif;
    fill: #fff;
    stroke: #fff;
    stroke-width: 1.5px;
}
.kana {
    font-family: "Noto Sans CJK JP", sans-serif;
    fill: #fbf02c;
}
.arrow-text {
    font-family: "Open Sans", sans-serif;
    font-size: 38px;
    font-weight: 700;
    fill: #000;
    filter: drop-shadow(2px 3px 2px rgba(0, 0, 0, 0.4));
}
.plus {
    fill: none;
    stroke: #fff;
    stroke-width: 7px;
}
.ring {
    fill: none;
    stroke: #e6301f;
    stroke-width: 9px;
}
.pointer {
    fill: #f4f4f4;
    stroke: #555;
    stroke-width: 1.5px;
}

/* participant tiles */
.tiles {
    width: 436px;
    display: flex;
    flex-direction: column;
    gap: 25px;
    padding-top: 1px;
}
.tile {
    position: relative;
    height: 245px;
    padding: 30px 26px 0 24px;
    border-radius: 16px;
    background: #3c4043;
    font-size: 29px;
    letter-spacing: 0.3px;
    white-space: nowrap;
}
.tile-speaking {
    box-shadow: inset 0 0 0 8px #6e9ee8;
}
.avatar {
    width: 131px;
    height: 131px;
    margin: 0 auto;
    display: flex;
    align-items: center;
    justify-content: center;
    border-radius: 50%;
    box-shadow: 1px 1px 0 1px #55585c;
    font-size: 72px;
    color: #fff;
}
.avatar-teal { background: #3c897c; }
.avatar-orange { background: #df742c; }
.avatar-blue { background: #3b87cd; }
.tile-name {
    margin-top: 21px;
    line-height: 34px;
}
.tile-badge {
    position: absolute;
    top: 15px;
    right: 16px;
    width: 52px;
    height: 52px;
    display: flex;
    align-items: center;
    justify-content: center;
    gap: 3px;
    border-radius: 50%;
    background: #333538;
    fill: #fff;
}
.tile-badge svg {
    width: 32px;
    height: 32px;
}
.tile-badge-blue {
    background: #3367d6;
}
.tile-badge-blue i {
    width: 8px;
    height: 8px;
    border-radius: 50%;
    background: #fff;
}
.tile-others {
    padding-top: 45px;
    text-align: center;
}
.others-row {
    display: flex;
    justify-content: center;
    padding-left: 6px;
}
.mini-avatar {
    width: 88px;
    height: 88px;
    display: flex;
    align-items: center;
    justify-content: center;
    border-radius: 50%;
    font-size: 44px;
    color: #fff;
}
.mini-grey { background: #7f919d; }
.mini-green {
    margin-left: -11px;
    background: #1e4d40;
    box-shadow: 0 0 0 2px #3c4043;
}
.others-label {
    margin-top: 33px;
    line-height: 34px;
}

/* bottom bar */
.meet-bar {
    flex: 1;
    min-height: 0;
    padding-top: 40px;
    display: flex;
    align-items: flex-start;
}
.meeting-info {
    width: 1117px;
    height: 80px;
    padding-left: 46px;
    display: flex;
    align-items: center;
    color: #fff;
}
.meeting-time {
    width: 91px;
    font-size: 30px;
    letter-spacing: -1.8px;
}
.meeting-code {
    margin-left: 23px;
    font-size: 33px;
    letter-spacing: 1.2px;
}
.info-sep {
    width: 2px;
    height: 32px;
    background: #9aa0a6;
}
.controls {
    display: flex;
    gap: 24px;
}
.ctl {
    width: 80px;
    height: 80px;
    display: flex;
    align-items: center;
    justify-content: center;
    border-radius: 50%;
    background: #3c4043;
    fill: #fff;
}
.ctl svg {
    width: 48px;
    height: 48px;
}
.ctl-red {
    background: #d95140;
}
.ctl-hangup {
    width: 112px;
    border-radius: 40px;
}
.hand-line {
    fill: none;
    stroke: #fff;
    stroke-width: 1.8px;
}
.side-actions {
    height: 80px;
    margin-left: 733px;
    display: flex;
    align-items: center;
    gap: 48px;
}
.act {
    position: relative;
    width: 48px;
    height: 48px;
    fill: #fff;
}
.act svg {
    display: block;
    width: 48px;
    height: 48px;
}
.people-count {
    position: absolute;
    top: -34px;
    left: 26px;
    width: 40px;
    height: 40px;
    display: flex;
    align-items: center;
    justify-content: center;
    border-radius: 50%;
    background: #5f6368;
    font-size: 22px;
    color: #f1f3f4;
}
```
